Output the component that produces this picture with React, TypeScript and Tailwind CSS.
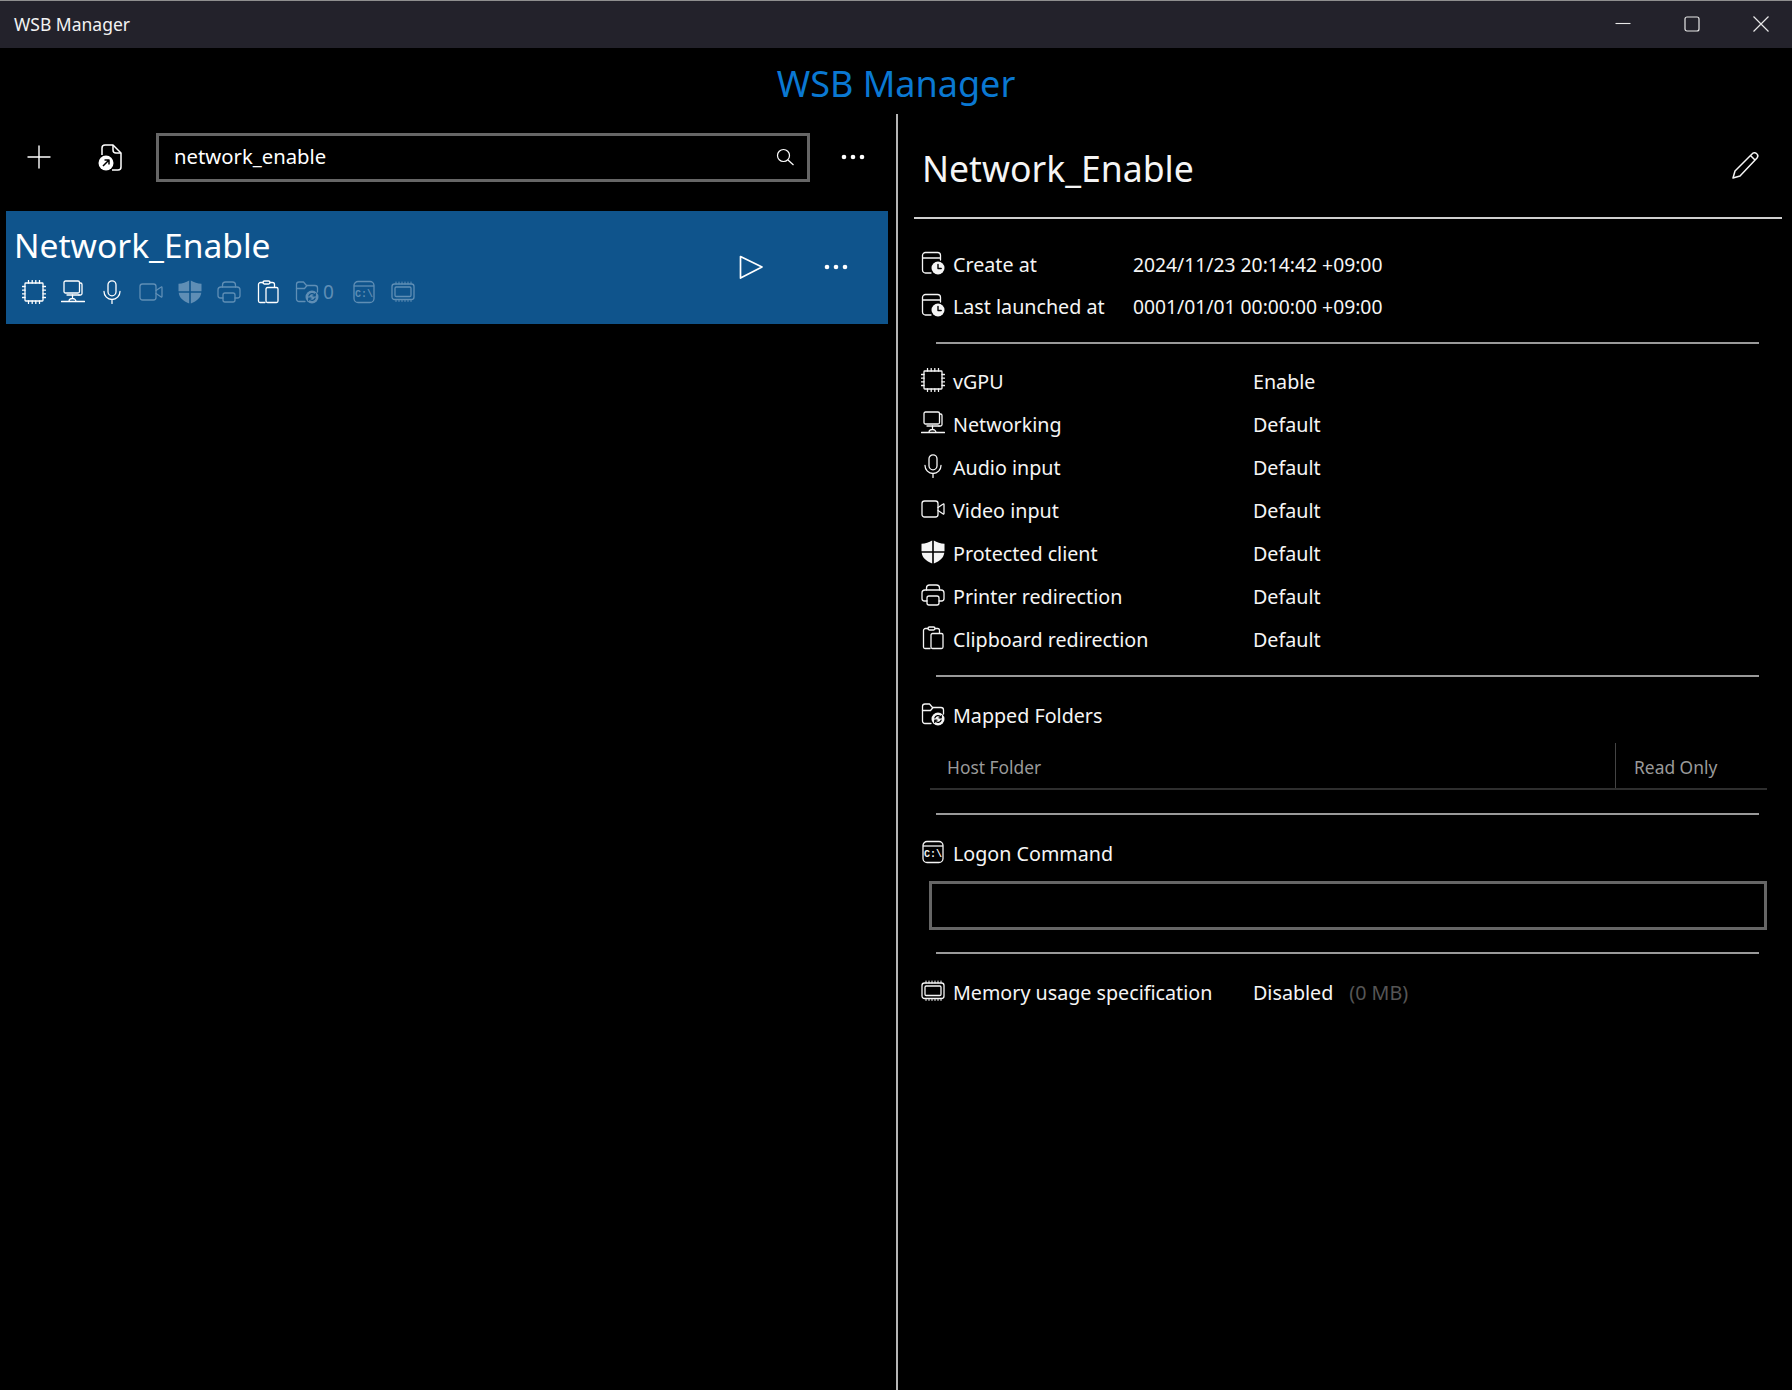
import React from "react";

type P = { className?: string; cut?: string };
const S = ({ className = "", children, sw = 1.3 }: { className?: string; children: React.ReactNode; sw?: number }) => (
  <svg viewBox="0 0 24 24" fill="none" stroke="currentColor" strokeWidth={sw} strokeLinecap="round" strokeLinejoin="round" className={`shrink-0 ${className}`}>
    {children}
  </svg>
);
const Chip = ({ className }: P) => (
  <S className={className}>
    <rect x="3" y="3" width="18" height="18" rx=".8" />
    <path d="M6.500 .5V3M10.200 .5V3M13.800 .5V3M17.500 .5V3M6.500 21v2.500M10.200 21v2.500M13.800 21v2.500M17.500 21v2.500M.5 6.500H3M.5 10.200H3M.5 13.800H3M.5 17.500H3M21 6.500h2.500M21 10.200h2.500M21 13.800h2.500M21 17.500h2.500" />
  </S>
);
const Net = ({ className }: P) => (
  <S className={className}>
    <path d="M18.500 3h1a1.500 1.500 0 0 1 1.500 1.500v9a1.500 1.500 0 0 1-1.500 1.500H18" />
    <rect x="3" y="1" width="15.500" height="12" rx="1.500" />
    <path d="M11.500 15v2.500M.5 21.500h23M8 21.500a3.500 3 0 0 1 7 0" />
    <path d="M6 15h12" />
  </S>
);
const Mic = ({ className }: P) => (
  <S className={className}>
    <rect x="8" y="0.8" width="8" height="15" rx="4" />
    <path d="M4 11.500a8 8 0 0 0 16 0M12 19.500v4" />
  </S>
);
const Video = ({ className }: P) => (
  <S className={className}>
    <rect x="1" y="4" width="16" height="16" rx="2.500" />
    <path d="M17 10.500l5.200-3.500a.5.5 0 0 1 .8.4v9.200a.5.5 0 0 1-.8.4L17 13.500" />
  </S>
);
const Shield = ({ className }: P) => (
  <svg viewBox="0 0 24 24" fill="currentColor" className={`shrink-0 ${className}`}>
    <path d="M11.200 .5C8 2.600 4.500 3.600.5 3.800v7.400h10.700z" />
    <path d="M12.800 .5c3.200 2.100 6.700 3.100 10.700 3.300v7.400H12.800z" />
    <path d="M.7 12.800c.7 5 4.200 8.400 10.500 10.700V12.800z" />
    <path d="M23.300 12.800c-.7 5-4.200 8.400-10.500 10.700V12.800z" />
  </svg>
);
const Printer = ({ className }: P) => (
  <S className={className}>
    <path d="M5.500 7V5a3 3 0 0 1 3-3h7a3 3 0 0 1 3 3v2" />
    <path d="M6 18H3.500A2.500 2.500 0 0 1 1 15.500V10a3 3 0 0 1 3-3h16a3 3 0 0 1 3 3v5.500A2.500 2.500 0 0 1 20.500 18H18" />
    <rect x="6" y="13" width="12" height="9" rx="2" />
  </S>
);
const Clip = ({ className }: P) => (
  <S className={className}>
    <path d="M7 2.500H4.500A2 2 0 0 0 2.500 4.500v16.500a1.500 1.500 0 0 0 1.500 1.500h5" />
    <path d="M14 2.500h2.500a2 2 0 0 1 2 2V7" />
    <rect x="7" y="1" width="7" height="3" rx="1.400" />
    <rect x="10" y="7.500" width="12" height="15" rx="1.500" />
  </S>
);
const Folder = ({ className, cut = "text-black" }: P) => (
  <svg viewBox="0 0 24 24" fill="none" stroke="currentColor" strokeWidth="1.300" strokeLinecap="round" strokeLinejoin="round" className={`shrink-0 ${className}`}>
    <path d="M10 21.500H4A2.500 2.500 0 0 1 1.500 19V4.500A2.500 2.500 0 0 1 4 2h4.500l3 3.500h8.500a2.500 2.500 0 0 1 2.500 2.500v4" />
    <path d="M1.500 8.500h8l2.500-3" />
    <circle cx="17" cy="17" r="6.500" fill="currentColor" stroke="none" />
    <g className={cut}>
      <path d="M13.800 16a3.300 3.300 0 0 1 5.700-1.200l.8 1M20.200 18a3.300 3.300 0 0 1-5.700 1.200l-.8-1M20.300 13.500v2.300h-2.300M13.700 20.500v-2.300H16" stroke="currentColor" strokeWidth="1.200" />
    </g>
  </svg>
);
const Cmd = ({ className }: P) => (
  <svg viewBox="0 0 24 24" fill="none" stroke="currentColor" strokeWidth="1.300" className={`shrink-0 ${className}`}>
    <rect x="2" y="1.500" width="20" height="21" rx="4" />
    <path d="M2 6h20" />
    <text x="12" y="16.800" textAnchor="middle" fill="currentColor" stroke="none" fontSize="10" fontWeight="700" fontFamily="'Liberation Mono', monospace">C:\</text>
  </svg>
);
const Mem = ({ className }: P) => (
  <S className={className}>
    <rect x="1" y="4" width="22" height="15.500" rx="2.500" />
    <rect x="4" y="7" width="16" height="9.500" rx="1.200" />
    <path d="M5 2v2M8 2v2M11 2v2M14 2v2M17 2v2M20 2v2M5 19.500v2M8 19.500v2M11 19.500v2M14 19.500v2M17 19.500v2M20 19.500v2" strokeWidth="1" />
  </S>
);
const Clock = ({ className, cut = "text-black" }: P) => (
  <svg viewBox="0 0 24 24" fill="none" stroke="currentColor" strokeWidth="1.300" strokeLinecap="round" strokeLinejoin="round" className={`shrink-0 ${className}`}>
    <path d="M10 22H4.500A3 3 0 0 1 1.500 19V4.500a3 3 0 0 1 3-3h12a3 3 0 0 1 3 3V9M1.500 7h18" />
    <circle cx="17" cy="17" r="6.500" fill="currentColor" stroke="none" />
    <g className={cut}><path d="M17 13.500V17.500h3.200" stroke="currentColor" strokeWidth="1.400" /></g>
  </svg>
);
const Dots = ({ className = "" }: { className?: string }) => (
  <svg viewBox="0 0 24 24" fill="currentColor" className={`shrink-0 ${className}`}>
    <circle cx="3" cy="12" r="2.300" /><circle cx="12" cy="12" r="2.300" /><circle cx="21" cy="12" r="2.300" />
  </svg>
);

const Row = ({ icon, label, h }: { icon: React.ReactNode; label: string; h: string }) => (
  <div className={`flex items-center ml-[7px] ${h}`}>
    <div className="w-6 mr-2 flex -mt-[2px]">{icon}</div>
    <span className="pt-[2px]">{label}</span>
  </div>
);
const Sep = ({ className = "" }: { className?: string }) => <div className={`h-[2px] bg-[#9a9a9a] ml-[22px] w-[823px] ${className}`} />;

const dim = "text-[#5f8eb5]";
const rows: [React.ReactNode, string, string, string][] = [
  [<Chip className="size-6" />, "vGPU", "Enable", "h-[42px]"],
  [<Net className="size-6" />, "Networking", "Default", "h-[43px]"],
  [<Mic className="size-6" />, "Audio input", "Default", "h-[43px]"],
  [<Video className="size-6" />, "Video input", "Default", "h-[43px]"],
  [<Shield className="size-6" />, "Protected client", "Default", "h-[43px]"],
  [<Printer className="size-6" />, "Printer redirection", "Default", "h-[43px]"],
  [<Clip className="size-6" />, "Clipboard redirection", "Default", "h-[43px]"],
];

export default function App() {
  return (
    <div className="w-full h-[1390px] overflow-hidden bg-black text-white flex flex-col font-['Noto_Sans','Open_Sans',sans-serif] text-[19.7px]">
      <div className="h-12 shrink-0 bg-[#23222b] border-t border-[#8f8f8f] flex items-center justify-between">
        <span className="pl-[14px] text-[17.500px] text-[#f2f2f2]">WSB Manager</span>
        <div className="flex items-center text-[#e8e8e8] -mt-[2px]">
          <svg viewBox="0 0 16 16" fill="none" stroke="currentColor" strokeWidth="1.100" className="size-4 mr-[53px]"><path d="M.5 7.500h15" /></svg>
          <svg viewBox="0 0 16 16" fill="none" stroke="currentColor" strokeWidth="1.200" className="size-4 mr-[53px]"><rect x="1" y="1" width="14" height="14" rx="2" /></svg>
          <svg viewBox="0 0 16 16" fill="none" stroke="currentColor" strokeWidth="1.200" className="size-4 mr-[23px]"><path d="M.5.500l15 15M15.500.500l-15 15" /></svg>
        </div>
      </div>
      <div className="h-[66px] shrink-0 flex items-center justify-center pt-[5px] text-[36px] text-[#0a78d2]">WSB Manager</div>
      <div className="flex-1 flex min-h-0">
        <div className="w-[896px] shrink-0 flex flex-col">
          <div className="flex items-center mt-[19px] h-[49px]">
            <svg viewBox="0 0 24 24" fill="none" stroke="currentColor" strokeWidth="1.400" strokeLinecap="round" className="size-6 ml-[27px] -mt-[2px]"><path d="M12 1v22M1 12h22" /></svg>
            <svg viewBox="0 0 24 28" fill="none" stroke="currentColor" strokeWidth="1.500" strokeLinejoin="round" className="w-6 h-7 ml-[47px] -mt-[2px]">
              <path d="M4 12V5a3 3 0 0 1 3-3h8l8 8v14a3 3 0 0 1-3 3h-6" />
              <path d="M15 2v5a3 3 0 0 0 3 3h5" />
              <circle cx="8" cy="20" r="7.500" fill="currentColor" stroke="none" />
              <path d="M5 23l6-6M6.500 17H11v4.500" stroke="black" strokeWidth="1.500" />
            </svg>
            <div className="ml-[34px] w-[654px] h-[49px] border-[3px] border-[#666666] flex items-center justify-between pl-[15px] pr-[13px] pb-[2px] text-[20.300px]">
              <span>network_enable</span>
              <svg viewBox="0 0 18 18" fill="none" stroke="currentColor" strokeWidth="1.200" className="size-[18px]"><circle cx="7.500" cy="7.500" r="6" /><path d="M12 12l5.500 5" /></svg>
            </div>
            <Dots className="size-6 ml-[31px] -mt-[2px]" />
          </div>
          <div className="mt-[29px] ml-[6px] w-[882px] h-[113px] bg-[#0f548c] flex items-center">
            <div className="flex-1 pl-[9px] flex flex-col">
              <div className="text-[33.600px] leading-[44px] -mt-[8px] -ml-[1px]">Network_Enable</div>
              <div className="flex items-center mt-[13px] h-6 pl-[7px] gap-[15px]">
                <Chip className="size-6" />
                <Net className="size-6" />
                <Mic className="size-6" />
                <Video className={`size-6 ${dim}`} />
                <Shield className={`size-6 ${dim}`} />
                <Printer className={`size-6 ${dim}`} />
                <Clip className="size-6" />
                <div className={`flex items-center gap-[4px] ${dim}`}>
                  <Folder className="size-6" cut="text-[#0f548c]" />
                  <span className="text-[19px] w-[10px] leading-6">0</span>
                </div>
                <Cmd className={`size-6 ml-[4px] ${dim}`} />
                <Mem className={`size-6 ${dim}`} />
              </div>
            </div>
            <svg viewBox="0 0 24 24" fill="none" stroke="currentColor" strokeWidth="1.700" strokeLinejoin="round" className="size-6 mr-[61px] ml-[2px] -mt-[2px]"><path d="M1.500 1.500L23 12 1.500 23z" /></svg>
            <Dots className="size-6 mr-[40px] -mt-[2px]" />
          </div>
        </div>
        <div className="w-[2px] shrink-0 bg-[#b5b5b5]" />
        <div className="w-[884px] shrink-0 pl-[16px] flex flex-col text-[#f5f5f5]">
          <div className="h-[103px] w-[868px] flex items-center justify-between pl-2 pt-[7px]">
            <span className="text-[35.600px]">Network_Enable</span>
            <svg viewBox="0 0 27 27" fill="none" stroke="currentColor" strokeWidth="1.500" strokeLinejoin="round" className="size-[27px] mr-[23px] -mt-[8px]">
              <path d="M1 26l2-7L20 2a3 3 0 0 1 5 4L8 24z" /><path d="M18.500 3.500l4.500 4.500" />
            </svg>
          </div>
          <div className="h-[2px] w-[868px] bg-[#cfcfcf]" />
          <div className="mt-6">
            <div className="flex items-center ml-[7px] h-[42px]"><div className="w-6 mr-2 flex -mt-[2px]"><Clock className="size-6" /></div><span className="w-[180px] whitespace-nowrap pt-[2px]">Create at</span><span className="pt-[2px] text-[19.300px]">2024/11/23 20:14:42 +09:00</span></div>
            <div className="flex items-center ml-[7px] h-[42px]"><div className="w-6 mr-2 flex -mt-[2px]"><Clock className="size-6" /></div><span className="w-[180px] whitespace-nowrap pt-[2px]">Last launched at</span><span className="pt-[2px] text-[19.300px]">0001/01/01 00:00:00 +09:00</span></div>
          </div>
          <Sep className="mt-[15px]" />
          <div className="mt-4">
            {rows.map((r) => (
              <div key={r[1]} className={`flex items-center ml-[7px] ${r[3]}`}>
                <div className="w-6 mr-2 flex -mt-[2px]">{r[0]}</div>
                <span className="w-[300px] pt-[2px]">{r[1]}</span>
                <span className="pt-[2px]">{r[2]}</span>
              </div>
            ))}
          </div>
          <Sep className="mt-[15px]" />
          <Row icon={<Folder className="size-6" />} label="Mapped Folders" h="h-[42px] mt-[17px]" />
          <div className="ml-4 w-[837px] h-[47px] mt-[7px] border-b-2 border-[#2e2e2e] flex items-stretch text-[17.400px] text-[#9a9a9a]">
            <div className="flex-1 pl-[17px] pt-[3px] flex items-center">Host Folder</div>
            <div className="w-[152px] border-l border-[#444444] pl-[18px] pt-[3px] flex items-center">Read Only</div>
          </div>
          <Sep className="mt-[23px]" />
          <Row icon={<Cmd className="size-6" />} label="Logon Command" h="h-[42px] mt-[17px]" />
          <div className="ml-[15px] w-[838px] h-[49px] mt-[7px] border-[3px] border-[#666666]" />
          <Sep className="mt-[22px]" />
          <div className="flex items-center ml-[7px] h-[42px] mt-[17px]">
            <div className="w-6 mr-2 flex -mt-[2px]"><Mem className="size-6" /></div>
            <span className="w-[300px] pt-[2px] whitespace-nowrap">Memory usage specification</span>
            <span className="pt-[2px]">Disabled</span>
            <span className="ml-4 pt-[2px] text-[#555555]">(0 MB)</span>
          </div>
        </div>
      </div>
    </div>
  );
}
